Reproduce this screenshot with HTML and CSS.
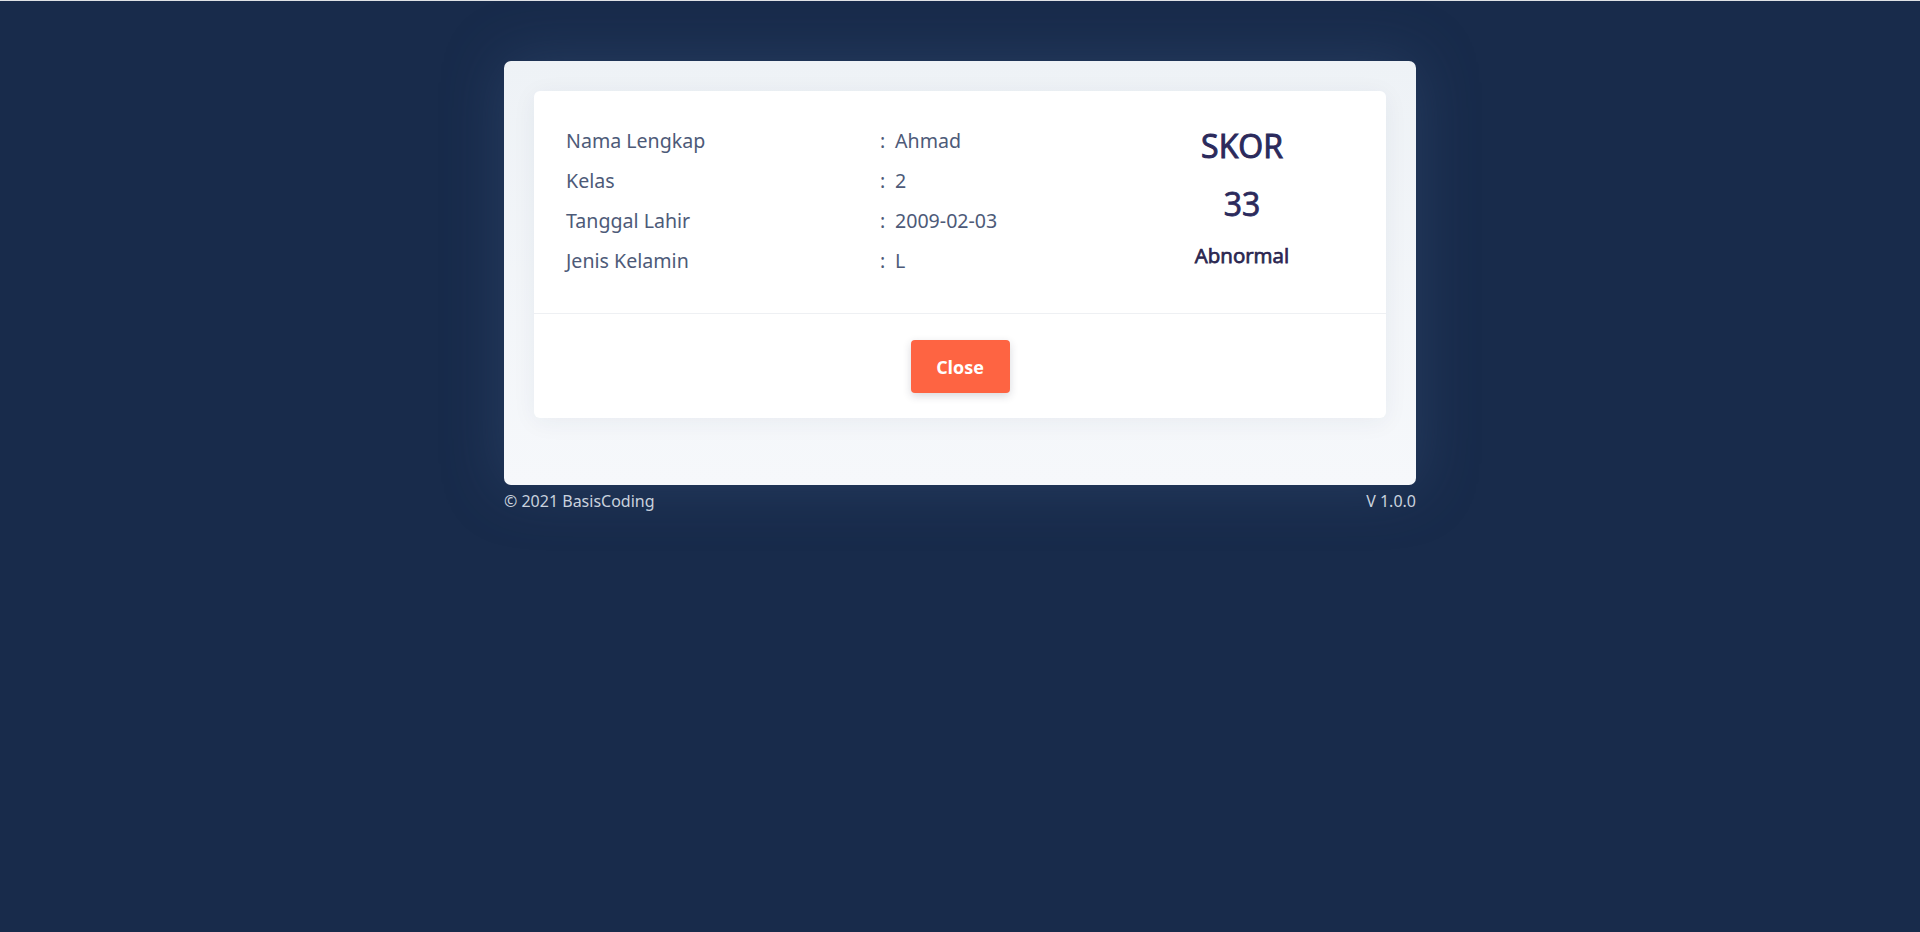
FILE: index.html
```html
<!DOCTYPE html>
<html lang="id">
<head>
<meta charset="utf-8">
<title>Hasil Skor</title>
<link rel="stylesheet" href="styles.css">
</head>
<body>
<div class="page">
  <div class="wrap">
    <div class="panel">
      <div class="card">
        <div class="card-body">
          <div class="details">
            <div class="row"><span class="label">Nama Lengkap</span><span class="colon">:</span><span class="value">Ahmad</span></div>
            <div class="row"><span class="label">Kelas</span><span class="colon">:</span><span class="value">2</span></div>
            <div class="row"><span class="label">Tanggal Lahir</span><span class="colon">:</span><span class="value">2009-02-03</span></div>
            <div class="row"><span class="label">Jenis Kelamin</span><span class="colon">:</span><span class="value">L</span></div>
          </div>
          <div class="score">
            <div class="score-title">SKOR</div>
            <div class="score-num">33</div>
            <div class="score-status">Abnormal</div>
          </div>
        </div>
        <div class="card-footer">
          <button class="btn-close" type="button">Close</button>
        </div>
      </div>
    </div>
    <div class="footer">
      <span>© 2021 BasisCoding</span>
      <span>V 1.0.0</span>
    </div>
  </div>
</div>
</body>
</html>
```
FILE: styles.css
```css
html, body {
  margin: 0;
  padding: 0;
}
body {
  background: #182b4b;
  font-family: "Noto Sans", "Open Sans", sans-serif;
  border-top: 1px solid #dfe2e6;
  min-height: 931px;
}
.page {
  padding-top: 60px;
}
.wrap {
  width: 912px;
  margin: 0 auto;
}
.panel {
  background: linear-gradient(180deg, #eef2f6 0%, #f6f8fb 100%);
  border-radius: 7px;
  padding: 30px 30px 67px;
  box-shadow: 0 0 60px rgba(58, 84, 124, 0.45);
}
.card {
  background: #ffffff;
  border-radius: 6px;
  box-shadow: 0 4px 24px rgba(30, 50, 90, 0.06);
}
.card-body {
  display: flex;
  padding: 30px 32px 32px;
  border-bottom: 1px solid #eef0f3;
}
.details {
  flex: 1;
}
.row {
  display: flex;
  height: 40px;
  line-height: 40px;
  font-size: 19.6px;
  color: #4d5a78;
}
.label {
  width: 314px;
}
.colon {
  width: 15px;
}
.score {
  width: 224px;
  text-align: center;
  color: #2b2a5c;
  font-family: "Open Sans", "Noto Sans", sans-serif;
}
.score-title {
  font-size: 32px;
  font-weight: 400;
  -webkit-text-stroke: 1px #2b2a5c;
  line-height: 40px;
  margin-top: 5px;
}
.score-num {
  font-size: 32px;
  font-weight: 400;
  -webkit-text-stroke: 0.8px #2b2a5c;
  line-height: 40px;
  margin-top: 18px;
}
.score-status {
  font-size: 20.5px;
  font-weight: 400;
  -webkit-text-stroke: 0.75px #2b2650;
  color: #2b2650;
  line-height: 30px;
  margin-top: 16px;
}
.card-footer {
  display: flex;
  justify-content: center;
  padding: 26px 0 25px;
}
.btn-close {
  width: 99px;
  height: 53px;
  border: 0;
  border-radius: 4px;
  background: #fe6442;
  color: #ffffff;
  font-family: "Open Sans", "Noto Sans", sans-serif;
  font-size: 18px;
  font-weight: 700;
  box-shadow: 0 3px 8px rgba(40, 40, 60, 0.18);
  cursor: pointer;
}
.footer {
  display: flex;
  justify-content: space-between;
  font-size: 16px;
  line-height: 24px;
  color: #c9d2de;
  margin-top: 4px;
}
```
